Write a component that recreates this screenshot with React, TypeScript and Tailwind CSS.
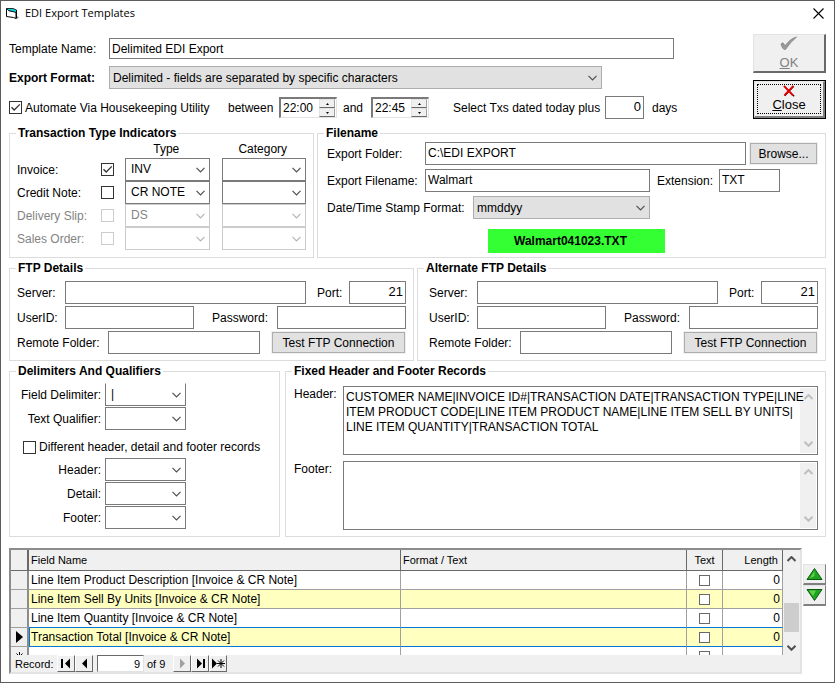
import { useId, useState } from "react";
import type { ReactNode } from "react";
import clsx from "clsx";

const HEADER_RECORD = [
  "CUSTOMER NAME|INVOICE ID#|TRANSACTION DATE|TRANSACTION TYPE|LINE",
  "ITEM PRODUCT CODE|LINE ITEM PRODUCT NAME|LINE ITEM SELL BY UNITS|",
  "LINE ITEM QUANTITY|TRANSACTION TOTAL",
].join("\n");

const FIELDS = [
  "Line Item Product Description [Invoice & CR Note]",
  "Line Item Sell By Units [Invoice & CR Note]",
  "Line Item Quantity [Invoice & CR Note]",
  "Transaction Total [Invoice & CR Note]",
];

const TYPES = [
  { label: "Invoice:", value: "INV", checked: true, disabled: false },
  { label: "Credit Note:", value: "CR NOTE", checked: false, disabled: false },
  { label: "Delivery Slip:", value: "DS", checked: false, disabled: true },
  { label: "Sales Order:", value: "", checked: false, disabled: true },
];

function Chevron({ className, up, bold }: { className?: string; up?: boolean; bold?: boolean }) {
  return (
    <svg width="9" height="6" viewBox="0 0 9 6" className={className} fill="none" stroke="currentColor">
      <path d={up ? "M0.5 5 4.5 1 8.5 5" : "M0.5 0.8 4.5 4.8 8.5 0.8"} strokeWidth={bold ? 2 : 1.2} />
    </svg>
  );
}

function Group({ title, className, children }: { title: string; className?: string; children: ReactNode }) {
  return (
    <fieldset className="min-w-0 border border-[#dcdcdc]">
      <legend className="ml-1.5 px-0.5 font-bold leading-4">{title}</legend>
      <div className={className}>{children}</div>
    </fieldset>
  );
}

function TextBox({ id, value = "", className, label }: { id?: string; value?: string; className?: string; label?: string }) {
  return (
    <input
      id={id}
      aria-label={label}
      type="text"
      defaultValue={value}
      className={clsx("h-[23px] min-w-0 border border-[#7a7a7a] bg-white px-0.5 pb-0.5 outline-none", className)}
    />
  );
}

function Select({
  id,
  value = "",
  label,
  className,
  disabled,
  filled,
  openTop,
}: {
  id?: string;
  value?: string;
  label?: string;
  className?: string;
  disabled?: boolean;
  filled?: boolean;
  openTop?: boolean;
}) {
  return (
    <div className={clsx("relative h-[23px]", className)}>
      <select
        id={id}
        aria-label={label}
        disabled={disabled}
        defaultValue={value}
        className={clsx(
          "block h-full w-full appearance-none border pr-5 outline-none",
          filled ? "border-[#adadad] bg-[#e1e1e1] pl-[3px]" : "bg-white pb-0.5 pl-[5px]",
          !filled && (disabled ? "border-[#cccccc] text-[#838383] opacity-100" : "border-[#7a7a7a]"),
          openTop && "border-t-white",
        )}
      >
        <option value={value}>{value}</option>
      </select>
      <Chevron
        className={clsx("pointer-events-none absolute top-[9px] right-[5px]", disabled ? "text-[#b5b5b5]" : "text-[#505050]")}
      />
    </div>
  );
}

function CheckBox({ id, checked, disabled, label }: { id?: string; checked?: boolean; disabled?: boolean; label?: string }) {
  return (
    <span className="relative block size-[13px] shrink-0">
      <input
        id={id}
        aria-label={label}
        type="checkbox"
        defaultChecked={checked}
        disabled={disabled}
        className="peer block size-full appearance-none border border-[#333333] bg-white disabled:border-[#cccccc]"
      />
      <svg viewBox="0 0 13 13" className="pointer-events-none absolute inset-0 hidden peer-checked:block" fill="none" stroke="#333">
        <path d="M2.5 6.2 5.2 9 10.8 3.4" strokeWidth="1.3" />
      </svg>
    </span>
  );
}

function TimeSpinner({ value, label }: { value: string; label: string }) {
  const arrow =
    "flex h-[9px] w-4 items-center justify-center border border-r-[#a0a0a0] border-b-[#696969] border-t-[#e3e3e3] border-l-[#e3e3e3] bg-[#f0f0f0]";
  return (
    <div className="flex h-[21px] w-[58px] items-center border border-t-2 border-l-2 border-[#e3e3e3] border-t-[#7a7a7a] border-l-[#7a7a7a] bg-white">
      <input type="text" aria-label={label} defaultValue={value} className="w-[38px] pl-0.5 outline-none" />
      <div className="flex flex-col">
        <button type="button" aria-label={`${label} up`} className={arrow}>
          <svg width="3" height="2"><path d="M1.5 0 3 2H0z" /></svg>
        </button>
        <button type="button" aria-label={`${label} down`} className={arrow}>
          <svg width="3" height="2"><path d="M0 0h3L1.5 2z" /></svg>
        </button>
      </div>
    </div>
  );
}

function PushButton({ children, className }: { children: ReactNode; className?: string }) {
  return (
    <button type="button" className={clsx("h-[21px] border border-[#adadad] bg-[#e1e1e1] outline outline-[#f0f0f0]", className)}>
      {children}
    </button>
  );
}

function FtpGroup({ title, className }: { title: string; className: string }) {
  const id = useId();
  return (
    <Group title={title} className={clsx("flex flex-col gap-0.5 pt-[5px] pr-[7px] pb-1.5", className)}>
      <div className="flex items-center">
        <label htmlFor={`${id}s`} className="w-12">Server:</label>
        <TextBox id={`${id}s`} className="flex-1" />
        <label htmlFor={`${id}p`} className="ml-[11px] w-8">Port:</label>
        <TextBox id={`${id}p`} value="21" className="w-[57px] text-right text-[13px]" />
      </div>
      <div className="flex items-center">
        <label htmlFor={`${id}u`} className="w-12">UserID:</label>
        <TextBox id={`${id}u`} className="flex-1" />
        <label htmlFor={`${id}w`} className="ml-[18px] w-[65px]">Password:</label>
        <TextBox id={`${id}w`} className="flex-1" />
      </div>
      <div className="flex items-center">
        <label htmlFor={`${id}r`} className="w-[91px]">Remote Folder:</label>
        <TextBox id={`${id}r`} className="flex-1" />
        <PushButton className="mr-px ml-3 w-[133px]">Test FTP Connection</PushButton>
      </div>
    </Group>
  );
}

function RecordBox({ label, value }: { label: string; value: string }) {
  const id = useId();
  return (
    <div className="flex">
      <label htmlFor={id} className="w-[49px] leading-4">{label}</label>
      <div className="flex h-[69px] min-w-0 flex-1 border border-[#7a7a7a] p-px">
        <textarea
          id={id}
          defaultValue={value}
          wrap="off"
          className="z-10 -mr-1.5 min-w-0 flex-1 resize-none overflow-hidden bg-transparent pt-0.5 pl-px leading-[15px] outline-none"
        />
        <div className="flex w-4 flex-col items-center justify-between bg-[#f0f0f0] py-1.5 text-[#bfbfbf]">
          <Chevron up bold />
          <Chevron bold />
        </div>
      </div>
    </div>
  );
}

function NavButton({ label, disabled, children }: { label: string; disabled?: boolean; children: ReactNode }) {
  return (
    <button
      type="button"
      aria-label={label}
      disabled={disabled}
      className="flex h-[17px] w-[18px] items-center justify-center border border-white border-r-[#696969] border-b-[#696969] bg-[#f0f0f0] text-black disabled:text-[#a0a0a0]"
    >
      <svg width="15" height="11" viewBox="0 0 15 11" fill="currentColor">{children}</svg>
    </button>
  );
}

function CellCheck({ label }: { label: string }) {
  return (
    <input
      type="checkbox"
      aria-label={label}
      className="mx-auto block size-[11px] appearance-none border border-[#696969] bg-white"
    />
  );
}

function FieldTable() {
  const [current] = useState(3);
  const head = "border-b border-r border-b-[#696969] border-r-[#696969] bg-[#f0f0f0] px-0.5 py-0 font-normal leading-5 text-[11px]";
  const cell = "border-b border-r border-r-[#a0a0a0] px-0.5 py-0 leading-[18px]";
  const rowHead = "border-b border-r-2 border-b-[#a0a0a0] border-r-[#8c8c8c] bg-[#f0f0f0] p-0";
  return (
    <div className="min-w-0 flex-1 border-2 border-[#e3e3e3] border-t-[#8c8c8c] border-l-[#8c8c8c] bg-[#f0f0f0]">
      <div className="flex h-[105px]">
        <div className="min-w-0 flex-1 overflow-hidden bg-white">
          <table className="w-full table-fixed border-separate border-spacing-0">
            <colgroup>
              <col className="w-[18px]" />
              <col />
              <col className="w-[286px]" />
              <col className="w-9" />
              <col className="w-[60px]" />
            </colgroup>
            <thead>
              <tr className="h-[21px]">
                <th className={clsx(head, "border-r-2")} />
                <th className={clsx(head, "text-left")}>Field Name</th>
                <th className={clsx(head, "text-left")}>Format / Text</th>
                <th className={clsx(head, "text-center")}>Text</th>
                <th className={clsx(head, "pr-1 text-right")}>Length</th>
              </tr>
            </thead>
            <tbody>
              {FIELDS.map((name, i) => {
                // the current row is framed by its own bottom line and the one above it
                const line = i === current || i === current - 1 ? "border-b-[#0078d7]" : "border-b-[#a0a0a0]";
                return (
                  <tr key={name} className={clsx("h-[19px]", i % 2 === 1 && "bg-[#ffffc0]")}>
                    <td className={rowHead}>
                      {i === current && (
                        <svg width="7" height="12" className="mx-auto"><path d="M0 0 7 6 0 12z" /></svg>
                      )}
                    </td>
                    <td className={clsx(cell, line, i === current && "border-l border-l-[#0078d7] pl-px")}>{name}</td>
                    <td className={clsx(cell, line)} />
                    <td className={clsx(cell, line)}>
                      <CellCheck label={`${name} text`} />
                    </td>
                    <td className={clsx(cell, line, "text-right", i === current && "border-r-[#0078d7]")}>0</td>
                  </tr>
                );
              })}
              <tr className="h-[19px]">
                <td className={rowHead}>
                  <svg width="9" height="9" className="mx-auto" stroke="#000">
                    <path d="M4.5 0v9M0.5 4.5h8M1.5 1.5l6 6M7.5 1.5l-6 6" />
                  </svg>
                </td>
                <td className={cell} />
                <td className={cell} />
                <td className={cell}>
                  <CellCheck label="New record text" />
                </td>
                <td className={cell} />
              </tr>
            </tbody>
          </table>
        </div>
        <div className="flex w-[17px] flex-col items-center text-[#505050]">
          <Chevron up bold className="mt-1.5" />
          <div className="mt-[41px] h-[29px] w-[15px] bg-[#cdcdcd]" />
          <Chevron bold className="mt-[13px]" />
        </div>
      </div>
      <div className="flex h-[17px] items-center text-[11px]">
        <label htmlFor="record" className="w-[46px] pl-1">Record:</label>
        <NavButton label="First record">
          <path d="M2 1h2v9H2zM11 0.5v10L6 5.5z" />
        </NavButton>
        <NavButton label="Previous record">
          <path d="M10 0.5v10L5 5.5z" />
        </NavButton>
        <input
          id="record"
          type="text"
          defaultValue="9"
          className="ml-1 h-[17px] w-[47px] border border-[#e3e3e3] border-t-[#696969] border-l-[#696969] bg-white pr-[3px] text-right outline-none"
        />
        <span className="w-[29px] pl-[3px]">of 9</span>
        <NavButton label="Next record" disabled>
          <path d="M5 0.5v10l5-5z" />
        </NavButton>
        <NavButton label="Last record">
          <path d="M4 0.5v10l5-5zM10 1h2v9h-2z" />
        </NavButton>
        <NavButton label="New record">
          <path d="M1 0.5v10l5-5z" />
          <path d="M10 1v9M6 5.5h8M7 2.5l6 6M13 2.5l-6 6" stroke="currentColor" />
        </NavButton>
      </div>
    </div>
  );
}

function MoveButton({ label, down }: { label: string; down?: boolean }) {
  return (
    <button
      type="button"
      aria-label={label}
      className="flex h-[21px] w-[23px] items-center justify-center border border-[#e3e3e3] border-r-[#808080] border-b-2 border-b-[#808080] bg-[#f0f0f0]"
    >
      <svg width="17" height="12" viewBox="0 0 17 12">
        <path d={down ? "M1 0.5h15L8.5 11.5z" : "M1 11.5h15L8.5 0.5z"} fill="#1ea41e" stroke="#0b5a12" />
        <path d={down ? "M3 1.5h7L7 7z" : "M3.5 10.5 8.5 3v5z"} fill="#5fd048" />
      </svg>
    </button>
  );
}

export default function App() {
  return (
    <div className="min-h-screen border border-[#5c5c5c] bg-white px-2 pb-2 font-['Liberation_Sans',Arial,sans-serif] text-[12px] leading-4 text-black">
      <header className="-mx-1 flex h-6 items-center">
        <svg width="14" height="14" viewBox="0 0 14 14" fill="none">
          <path d="M3.500 4.500 11 6v6.500L8.500 11.500 1.500 10.500v-8" fill="#fff" stroke="#000" />
          <path d="M1.500 2.500H8l3.500 1.500v2.500L3.500 4.500z" fill="#12d3d8" stroke="#000" strokeWidth="0.8" />
          <path d="M11.500 4v8.500" stroke="#000" />
          <path d="M12 10.500l2 .5-2 2z" fill="#808080" />
        </svg>
        <h1 className="ml-1.5 flex-1 font-['Open_Sans',sans-serif] text-[11px]">EDI Export Templates</h1>
        <button type="button" aria-label="Close window" className="mr-0.5 p-1">
          <svg width="11" height="11" stroke="#000" fill="none" strokeWidth="1.1">
            <path d="M0.500 0.500l10 10M10.500 0.500l-10 10" />
          </svg>
        </button>
      </header>

      <main>
        <section className="flex pt-[9px]">
          <div className="min-w-0 flex-1 pt-1">
            <div className="flex items-center pr-[79px]">
              <label htmlFor="template" className="w-[100px]">Template Name:</label>
              <input
                id="template"
                type="text"
                defaultValue="Delimited EDI Export"
                className="h-[21px] min-w-0 flex-1 border border-[#7a7a7a] px-0.5 outline-none"
              />
            </div>
            <div className="mt-[7px] flex items-center pr-[151px]">
              <label htmlFor="format" className="w-[100px] font-bold">Export Format:</label>
              <Select id="format" filled value="Delimited - fields are separated by specific characters" className="flex-1" />
            </div>
            <div className="mt-[7px] flex items-center whitespace-nowrap">
              <CheckBox id="automate" checked />
              <label htmlFor="automate" className="ml-[3px] w-[203px]">Automate Via Housekeeping Utility</label>
              <span className="w-[51px]">between</span>
              <TimeSpinner value="22:00" label="Start time" />
              <span className="w-[34px] pl-1.5">and</span>
              <TimeSpinner value="22:45" label="End time" />
              <label htmlFor="days" className="ml-6 w-[152px]">Select Txs dated today plus</label>
              <TextBox id="days" value="0" className="w-[39px] text-right text-[13px]" />
              <span className="ml-2">days</span>
            </div>
          </div>
          <div className="flex w-[73px] flex-col gap-[7px]">
            <button
              type="button"
              disabled
              className="flex h-[39px] flex-col items-center justify-between border border-r-2 border-b-2 border-[#e3e3e3] border-r-[#696969] border-b-[#696969] bg-[#f0f0f0] text-[13px] text-[#808080]"
            >
              <svg width="18" height="17" viewBox="0 0 18 17">
                <path d="M1 9q2-2.500 3 0l1 2Q9.500 4 16.500 2 10 7.500 5.500 14.500 2.500 15 1 9z" fill="#9a9a9a" stroke="#858585" strokeWidth="0.8" />
              </svg>
              <span><u>O</u>K</span>
            </button>
            <button type="button" className="h-[39px] border border-black bg-[#f0f0f0] text-[13px]">
              <span className="block h-full border border-r-2 border-b-2 border-[#e3e3e3] border-r-[#808080] border-b-[#808080] p-0.5">
                <span className="flex h-full flex-col items-center justify-between border border-dotted border-black">
                  <svg width="14" height="14" viewBox="0 0 14 14" fill="none">
                    <path d="M1.500 1.500 13 13M12.500 1.500 2 12.500" stroke="#3c0000" strokeWidth="1.6" />
                    <path d="M1 1 11.500 12M12 1 1.500 12" stroke="#ee0000" strokeWidth="2" />
                  </svg>
                  <span className="leading-4"><u>C</u>lose</span>
                </span>
              </span>
            </button>
          </div>
        </section>

        <section className="mt-1.5 grid grid-cols-[305fr_509fr] gap-[3px]">
          <Group
            title="Transaction Type Indicators"
            className="grid grid-cols-[84px_24px_1fr_1fr] items-center px-[7px] pb-[7px]"
          >
            <span className="col-start-3 h-[17px] pr-2 text-center">Type</span>
            <span className="h-[17px] pl-1 text-center">Category</span>
            {TYPES.map((t, i) => (
              <div key={t.label} className="contents">
                <label htmlFor={`type${i}`} className={clsx(t.disabled && "text-[#838383]")}>{t.label}</label>
                <CheckBox id={`type${i}`} checked={t.checked} disabled={t.disabled} />
                <Select label={`${t.label} type`} value={t.value} disabled={t.disabled} className="mr-1.5" />
                <Select label={`${t.label} category`} disabled={t.disabled} className="ml-1.5" />
              </div>
            ))}
          </Group>

          <Group title="Filename" className="flex flex-col gap-1 pt-px pr-[7px] pb-1 pl-[9px]">
            <div className="flex items-center">
              <label htmlFor="folder" className="w-[98px]">Export Folder:</label>
              <TextBox id="folder" value="C:\EDI EXPORT" className="flex-1" />
              <PushButton className="mr-px ml-1 w-[67px]">Browse...</PushButton>
            </div>
            <div className="flex items-center pr-[38px]">
              <label htmlFor="filename" className="w-[98px]">Export Filename:</label>
              <TextBox id="filename" value="Walmart" className="flex-1" />
              <label htmlFor="ext" className="ml-[7px] w-[62px]">Extension:</label>
              <TextBox id="ext" value="TXT" className="w-[61px]" />
            </div>
            <div className="flex items-center pr-[168px]">
              <label htmlFor="stamp" className="w-[146px]">Date/Time Stamp Format:</label>
              <Select id="stamp" filled value="mmddyy" className="flex-1" />
            </div>
            <output className="mt-1.5 ml-2 h-6 w-[177px] self-center bg-[#33ff33] pr-3 text-center leading-6 font-bold">
              Walmart041023.TXT
            </output>
          </Group>
        </section>

        <section className="mt-0.5 grid grid-cols-[405fr_409fr] gap-[3px]">
          <FtpGroup title="FTP Details" className="pl-[7px]" />
          <FtpGroup title="Alternate FTP Details" className="pl-[11px]" />
        </section>

        <section className="mt-0.5 grid grid-cols-[271fr_541fr] gap-[5px]">
          <Group
            title="Delimiters And Qualifiers"
            className="grid grid-cols-[84px_81px] items-center gap-x-1 gap-y-px px-[7px] pt-1 pb-[7px] text-right"
          >
            <label htmlFor="delimiter">Field Delimiter:</label>
            <Select id="delimiter" value="|" openTop />
            <label htmlFor="qualifier">Text Qualifier:</label>
            <Select id="qualifier" />
            <div className="col-span-2 flex h-[26px] items-center gap-[3px] pt-1.5 pl-1.5 whitespace-nowrap">
              <CheckBox id="different" />
              <label htmlFor="different">Different header, detail and footer records</label>
            </div>
            <label htmlFor="dHeader">Header:</label>
            <Select id="dHeader" />
            <label htmlFor="dDetail">Detail:</label>
            <Select id="dDetail" />
            <label htmlFor="dFooter">Footer:</label>
            <Select id="dFooter" />
          </Group>

          <Group title="Fixed Header and Footer Records" className="flex flex-col gap-1.5 pt-[7px] pr-[7px] pl-2">
            <RecordBox label="Header:" value={HEADER_RECORD} />
            <RecordBox label="Footer:" value="" />
          </Group>
        </section>

        <section className="mt-[11px] flex items-start gap-px">
          <FieldTable />
          <div className="mt-4 flex flex-col">
            <MoveButton label="Move field up" />
            <MoveButton label="Move field down" down />
          </div>
        </section>
      </main>
    </div>
  );
}
